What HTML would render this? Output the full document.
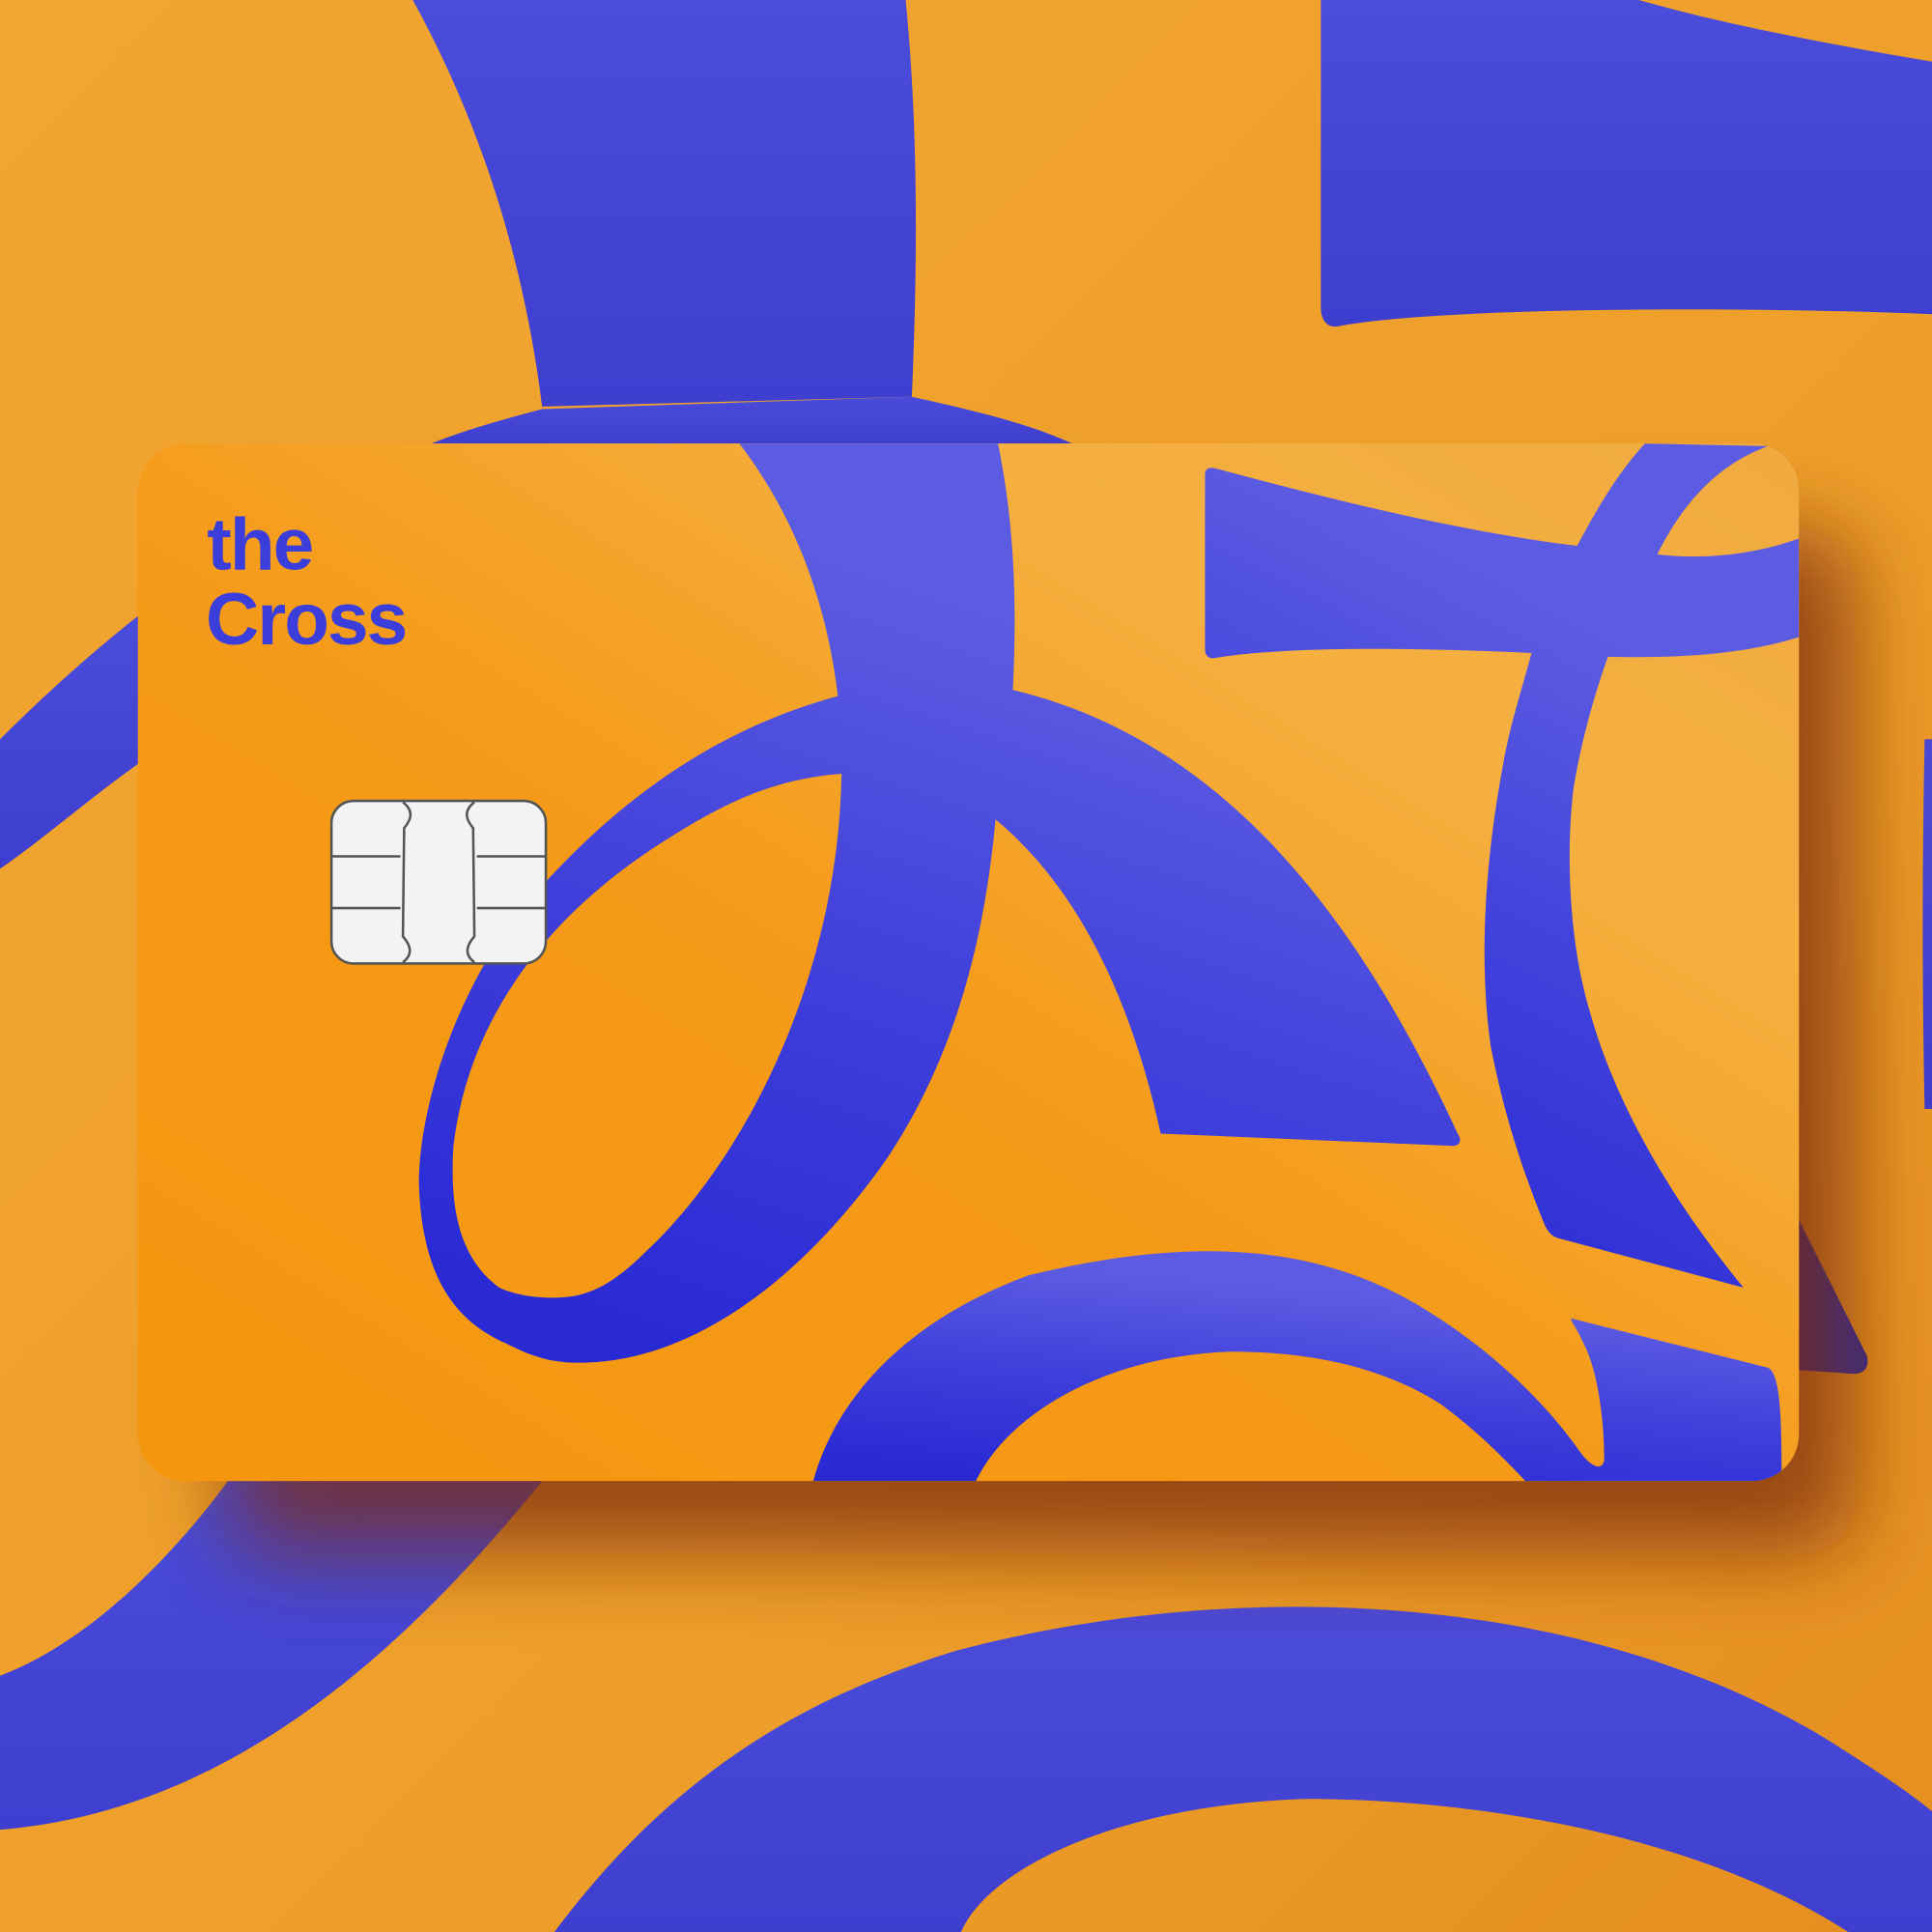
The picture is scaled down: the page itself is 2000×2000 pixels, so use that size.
<!DOCTYPE html>
<html><head><meta charset="utf-8"><style>
html,body{margin:0;padding:0;background:#F0A22E;}
svg{display:block}
</style></head><body>
<svg width="2000" height="2000" viewBox="0 0 1568 1568" xmlns="http://www.w3.org/2000/svg">
<defs>
<linearGradient id="bg" x1="0" y1="0" x2="1" y2="1">
<stop offset="0" stop-color="#F2A531"/><stop offset="0.6" stop-color="#EE9F2A"/><stop offset="1" stop-color="#E48E20"/>
</linearGradient>
<linearGradient id="bb" x1="0" y1="0" x2="0" y2="1">
<stop offset="0" stop-color="#4A4CDA"/><stop offset="1" stop-color="#3E3ECF"/>
</linearGradient>
<linearGradient id="card" x1="0" y1="1" x2="1" y2="0">
<stop offset="0" stop-color="#F5960F"/><stop offset="0.45" stop-color="#F59A18"/><stop offset="0.75" stop-color="#F5B040"/><stop offset="1" stop-color="#F0AA40"/>
</linearGradient>
<linearGradient id="cb" x1="0.3" y1="1" x2="0.6" y2="0.2">
<stop offset="0" stop-color="#2A2AD5"/><stop offset="0.5" stop-color="#3F3FDB"/><stop offset="1" stop-color="#5C5CE2"/>
</linearGradient>
<filter id="sh" x="-20%" y="-20%" width="150%" height="160%">
<feGaussianBlur stdDeviation="35"/>
</filter>
<clipPath id="cc"><rect x="112" y="360" width="1348" height="842" rx="38"/></clipPath>
</defs>
<rect width="1568" height="1568" fill="url(#bg)"/>
<g fill="url(#bb)">
<path d="M335 0 C390 100 425 210 440 330 L740 322 C745 210 745 100 735 0 Z"/>
<path d="M0 600 C40 560 80 525 112 500 L112 620 C70 650 30 685 0 705 Z"/>
<path d="M440 1202 C320 1350 180 1470 0 1485 L0 1360 C80 1330 150 1250 185 1202 Z"/>
<path d="M450 1568 C560 1420 680 1370 775 1340 C1000 1280 1280 1290 1480 1410 C1520 1435 1550 1455 1568 1470 L1568 1568 L1500 1568 C1380 1490 1200 1460 1060 1460 C900 1465 800 1520 780 1568 Z"/>
<path d="M1072 0 L1330 0 C1400 20 1480 35 1568 50 L1568 255 C1400 248 1160 250 1085 265 C1076 266 1072 258 1072 250 Z"/>
<path d="M1562 600 L1568 600 L1568 900 L1562 900 C1560 800 1560 700 1562 600 Z"/>
<path d="M1460 990 L1515 1100 C1518 1110 1512 1115 1505 1115 L1460 1112 Z" fill="#2E2E9E"/>
<path d="M350 360 C380 348 410 340 440 332 L740 322 C800 335 840 346 870 360 Z"/>
</g>
<rect x="185" y="430" width="1320" height="830" rx="40" fill="#7A2A10" opacity="0.75" filter="url(#sh)"/>
<rect x="112" y="360" width="1348" height="842" rx="38" fill="url(#card)"/>
<g clip-path="url(#cc)" fill="url(#cb)" fill-rule="evenodd">
<path d="M600 360 C640 412 670 480 680 565 C580 592 500 650 430 730 C370 800 340 900 340 960 C342 1030 365 1070 410 1090 C430 1100 445 1106 470 1106 C560 1106 650 1040 720 940 C780 850 800 750 808 665 C880 725 920 820 942 920 L1180 930 C1186 929 1186 924 1183 920 C1100 740 990 600 822 560 C826 480 822 420 810 360 Z
M683 628 C630 632 590 650 540 682 C440 745 380 830 368 930 C365 980 372 1020 405 1045 C420 1052 440 1054 455 1053 C480 1052 500 1040 525 1015 C600 945 680 800 683 628 Z"/>
<path d="M978 385 C978 380 982 379 986 380 C1090 408 1190 432 1280 443 C1295 415 1312 385 1335 360 L1435 362 C1400 375 1370 400 1345 450 C1390 455 1430 448 1460 437 L1460 517 C1410 533 1350 534 1305 533 C1290 575 1282 610 1277 640 C1270 700 1275 770 1290 820 C1315 910 1370 990 1415 1045 L1265 1005 C1258 1003 1255 998 1252 990 C1232 940 1220 900 1210 850 C1200 780 1205 700 1220 620 C1225 590 1235 560 1243 530 C1140 525 1040 525 986 534 C981 535 978 532 978 527 Z"/>
<path d="M660 1202 C680 1130 740 1070 835 1035 C960 1005 1070 1005 1165 1068 C1215 1100 1255 1140 1280 1175 C1290 1190 1300 1195 1302 1185 C1302 1150 1296 1110 1285 1090 C1280 1078 1275 1073 1275 1070 L1435 1110 C1445 1115 1446 1150 1446 1202 L1238 1202 C1210 1172 1190 1155 1170 1140 C1120 1108 1060 1097 1000 1097 C900 1100 820 1145 792 1202 Z"/>
</g>
<text x="168" y="462" font-family="'Liberation Sans', sans-serif" font-weight="bold" font-size="60" fill="#3B3EDB" letter-spacing="-1.5">the</text>
<text x="167" y="523" font-family="'Liberation Sans', sans-serif" font-weight="bold" font-size="60" fill="#3B3EDB" letter-spacing="-1.5">Cross</text>
<g stroke="#555" stroke-width="2" fill="#F3F3F3">
<rect x="269" y="650" width="174" height="132" rx="18"/>
<path d="M327 651 C336 658 334 665 328 672 L327 760 C334 768 335 775 327 781 M385 651 C376 658 378 665 384 672 L385 760 C378 768 377 775 385 781 M269 695 L325 695 M269 737 L325 737 M387 695 L443 695 M387 737 L443 737" fill="none"/>
</g>
</svg>
</body></html>
